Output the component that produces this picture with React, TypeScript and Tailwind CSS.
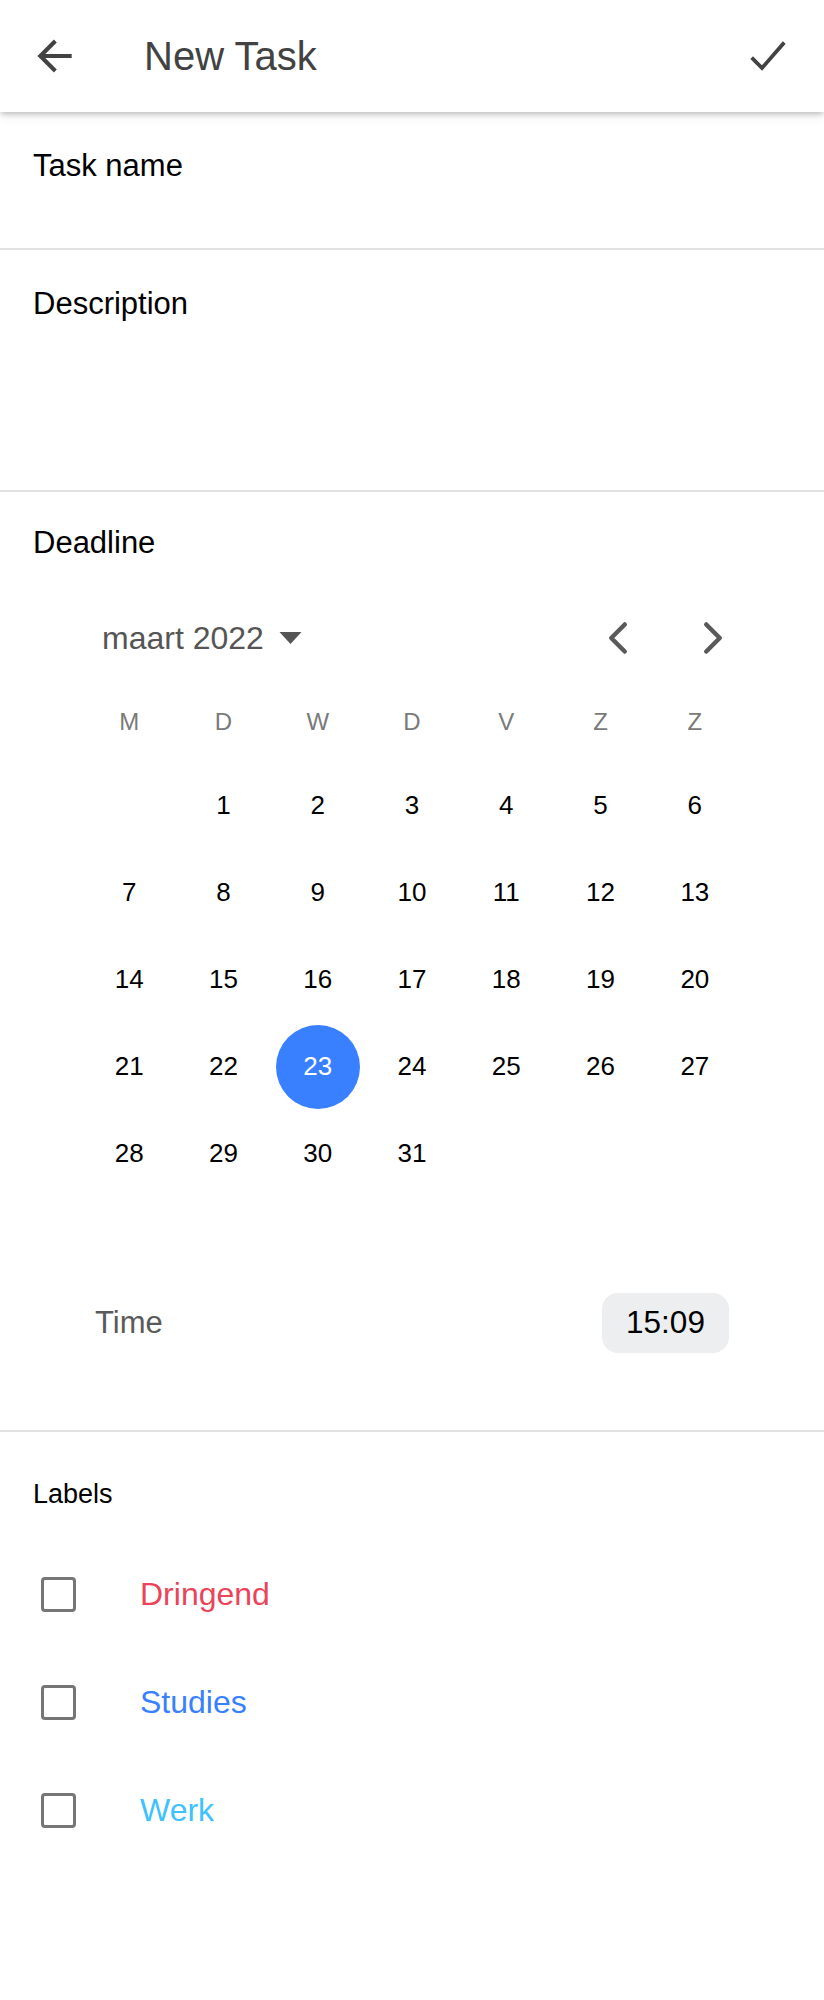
import React, { useState } from "react";

const weekDays = ["M", "D", "W", "D", "V", "Z", "Z"];

// maart 2022 begint op dinsdag
const days: (number | null)[] = [null, ...Array.from({ length: 31 }, (_, i) => i + 1)];
while (days.length % 7 !== 0) days.push(null);

const labels = [
  { name: "Dringend", color: "text-[#eb445a]" },
  { name: "Studies", color: "text-[#3880ff]" },
  { name: "Werk", color: "text-[#3dc2ff]" },
];

const App: React.FC = () => {
  const [selected, setSelected] = useState(23);
  const [checked, setChecked] = useState<string[]>([]);

  const toggle = (name: string) => {
    setChecked((prev) => (prev.includes(name) ? prev.filter((n) => n !== name) : [...prev, name]));
  };

  const weeks: (number | null)[][] = [];
  for (let i = 0; i < days.length; i += 7) weeks.push(days.slice(i, i + 7));

  return (
    <div className="min-h-[2000px] bg-white font-[family-name:'Liberation_Sans',Arial,sans-serif] text-black">
      {/* header */}
      <header className="relative z-10 h-[112px] flex items-center bg-white shadow-[0_3px_5px_-1px_rgba(0,0,0,0.22),0_6px_10px_0_rgba(0,0,0,0.06)]">
        <button className="ml-[31px] w-[48px] h-[48px] flex items-center justify-center text-[#424242]">
          <svg viewBox="0 0 512 512" className="w-[48px] h-[48px]">
            <path d="M244 400L100 256l144-144M120 256h292" fill="none" stroke="currentColor" strokeWidth="44" strokeLinecap="square" strokeMiterlimit="10" />
          </svg>
        </button>
        <h1 className="ml-[65px] text-[40px] leading-none text-[#424242]">New Task</h1>
        <button className="ml-auto mr-[32px] w-[48px] h-[48px] flex items-center justify-center text-[#424242]">
          <svg viewBox="0 0 512 512" className="w-[48px] h-[48px]">
            <path d="M416 128L192 384l-96-96" fill="none" stroke="currentColor" strokeWidth="40" strokeLinecap="square" strokeMiterlimit="10" />
          </svg>
        </button>
      </header>

      {/* task name */}
      <div className="h-[138px] border-b-2 border-[#e2e2e2] pt-[36px] px-[33px]">
        <div className="text-[31px] leading-[36px]">Task name</div>
      </div>

      {/* description */}
      <div className="h-[242px] border-b-2 border-[#e2e2e2] pt-[36px] px-[33px]">
        <div className="text-[31px] leading-[36px]">Description</div>
      </div>

      {/* deadline */}
      <div className="h-[940px] border-b-2 border-[#e2e2e2] pt-[33px]">
        <div className="px-[33px] text-[31px] leading-[36px]">Deadline</div>

        <div className="mx-[82px] mt-[53px]">
          <div className="h-[48px] flex items-center">
            <div className="pl-[20px] flex items-center gap-[15px] text-[32px] text-[#555555]">
              <span>maart 2022</span>
              <svg viewBox="0 0 22 12" className="w-[23px] h-[12px]">
                <polygon points="0,0 22,0 11,12" fill="#555555" />
              </svg>
            </div>
            <button className="ml-auto w-[48px] h-[48px] text-[#5a5a5a]">
              <svg viewBox="0 0 512 512" className="w-[48px] h-[48px]">
                <path d="M328 112L184 256l144 144" fill="none" stroke="currentColor" strokeWidth="48" strokeLinecap="round" strokeLinejoin="round" />
              </svg>
            </button>
            <button className="ml-[47px] mr-[5px] w-[48px] h-[48px] text-[#5a5a5a]">
              <svg viewBox="0 0 512 512" className="w-[48px] h-[48px]">
                <path d="M184 112l144 144-144 144" fill="none" stroke="currentColor" strokeWidth="48" strokeLinecap="round" strokeLinejoin="round" />
              </svg>
            </button>
          </div>

          <div className="mt-[30px] h-[60px] grid grid-cols-7 items-center text-center text-[24px] text-[#7a7a7a]">
            {weekDays.map((d, i) => (
              <div key={i}>{d}</div>
            ))}
          </div>

          <div className="mt-[10px]">
            {weeks.map((week, wi) => (
              <div key={wi} className="h-[87px] grid grid-cols-7 items-center">
                {week.map((day, di) => (
                  <div key={di} className="flex items-center justify-center">
                    {day !== null && (
                      <button
                        onClick={() => setSelected(day)}
                        className={
                          day === selected
                            ? "w-[84px] h-[84px] rounded-full bg-[#3880ff] text-white text-[26px]"
                            : "w-[84px] h-[84px] rounded-full text-[26px] text-black"
                        }
                      >
                        {day}
                      </button>
                    )}
                  </div>
                ))}
              </div>
            ))}
          </div>

          <div className="mt-[96px] h-[60px] flex items-center justify-between px-[13px]">
            <span className="text-[31px] text-[#5a5a5a]">Time</span>
            <span className="h-[60px] w-[127px] rounded-[16px] bg-[#edeef0] flex items-center justify-center text-[31.5px]">15:09</span>
          </div>
        </div>
      </div>

      {/* labels */}
      <div className="pt-[46px]">
        <div className="px-[33px] text-[27px] leading-[32px]">Labels</div>
        <div className="mt-[30px]">
          {labels.map((l) => (
            <label key={l.name} className="h-[108px] flex items-center cursor-pointer">
              <span
                onClick={() => toggle(l.name)}
                className={
                  checked.includes(l.name)
                    ? "ml-[41px] w-[35px] h-[35px] rounded-[4px] border-[3px] border-[#3880ff] bg-[#3880ff]"
                    : "ml-[41px] w-[35px] h-[35px] rounded-[4px] border-[3px] border-[#767676]"
                }
              />
              <span className={`ml-[64px] text-[32px] ${l.color}`}>{l.name}</span>
            </label>
          ))}
        </div>
      </div>
    </div>
  );
};

export default App;
